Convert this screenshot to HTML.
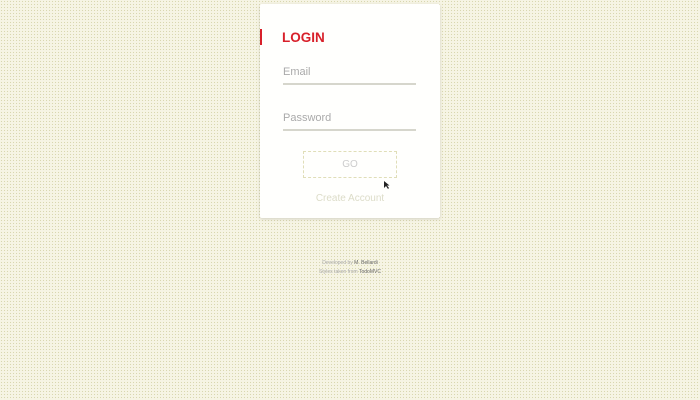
<!DOCTYPE html>
<html><head><style>
html,body{margin:0;width:700px;height:400px;overflow:hidden}
body{background-color:#f6f4e4;background-image:radial-gradient(#d9d6b0 0.6px,transparent 0.8px);background-size:3px 3px;font-family:"Liberation Sans",sans-serif;position:relative}
.card{position:absolute;left:260px;top:4px;width:180px;height:214px;background:#fffffd;border-radius:2px;box-shadow:0 1px 3px rgba(0,0,0,.15)}
.bar{position:absolute;left:0;top:25px;width:2px;height:16px;background:#d8202a}
.title{position:absolute;left:22px;top:26px;color:#d8202a;font-weight:bold;font-size:13.5px}
.field{position:absolute;left:23px;width:133px;border-bottom:2px solid #d6d6cc;color:#aaa;font-size:11px;padding-bottom:5px}
.btn{position:absolute;left:43px;top:147px;width:92px;height:25px;border:1px dashed #e0deb8;color:#ccc;font-size:10px;text-align:center;line-height:25px}
.ca{position:absolute;left:0;width:180px;top:189px;text-align:center;color:#dcdcc8;font-size:10px}
.foot{position:absolute;left:0;width:700px;text-align:center;font-size:5px;color:#aaa}
.foot b{color:#666;font-weight:normal}
</style></head><body>
<div class="card">
<div class="bar"></div>
<div class="title">LOGIN</div>
<div class="field" style="top:62px">Email</div>
<div class="field" style="top:108px">Password</div>
<div class="btn">GO</div>
<div class="ca">Create Account</div>
</div>
<div class="foot" style="top:260px">Developed by <b>M. Bellardi</b></div>
<div class="foot" style="top:269px">Styles taken from <b>TodoMVC</b></div>
<svg style="position:absolute;left:383px;top:180px" width="8" height="10"><path d="M1 1 L1 8 L3 6 L5 9 L6 8 L4 5.5 L6.5 5.5 Z" fill="#222"/></svg>
</body></html>
